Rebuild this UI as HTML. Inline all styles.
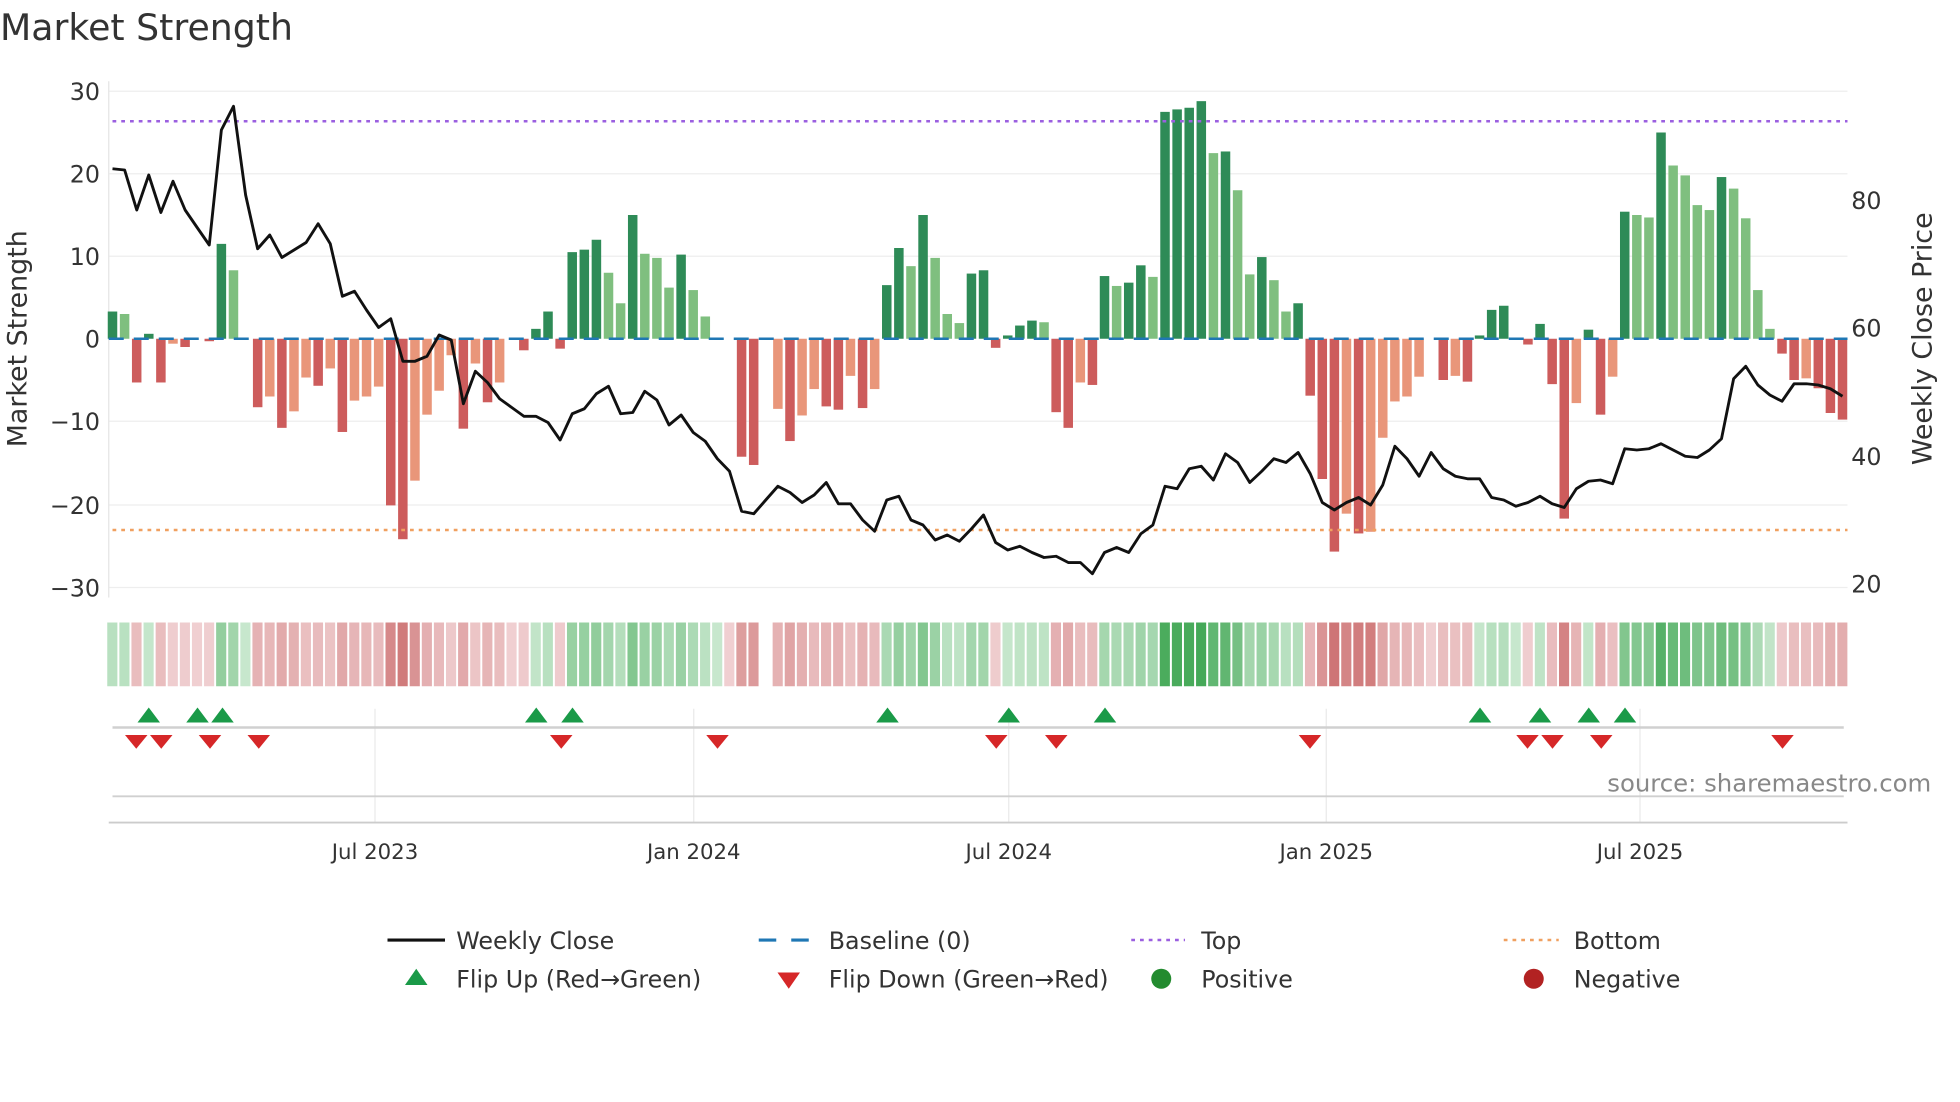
<!DOCTYPE html>
<html><head><meta charset="utf-8"><style>
html,body{margin:0;padding:0;background:#fff;width:1960px;height:1102px;overflow:hidden}
svg{display:block}
text{font-family:"DejaVu Sans","Liberation Sans",sans-serif;fill:#333}
</style></head><body>
<svg id="s" width="1960" height="1102" viewBox="0 0 1568 881.6" xmlns="http://www.w3.org/2000/svg">
<text x="0" y="32" font-size="29">Market Strength</text>
<g stroke="#eeeeee" stroke-width="1">
<line x1="87" x2="1478" y1="73" y2="73"/><line x1="87" x2="1478" y1="139" y2="139"/><line x1="87" x2="1478" y1="205" y2="205"/>
<line x1="87" x2="1478" y1="337" y2="337"/><line x1="87" x2="1478" y1="404" y2="404"/><line x1="87" x2="1478" y1="470" y2="470"/>
</g>
<line x1="87" x2="87" y1="65" y2="478" stroke="#e4e4e4"/>
<g id="bars"></g>
<line x1="87" x2="1478" y1="271" y2="271" stroke="#1f77b4" stroke-width="2" stroke-dasharray="12,8"/>
<line x1="90" x2="1478" y1="97" y2="97" stroke="#9b5fe0" stroke-width="2" stroke-dasharray="3,4"/>
<line x1="90" x2="1478" y1="424" y2="424" stroke="#f0a060" stroke-width="2" stroke-dasharray="3,4"/>
<polyline id="price" fill="none" stroke="#111" stroke-width="2.3" stroke-linejoin="round"/>
<g font-size="19" text-anchor="end">
<text x="80" y="80">30</text><text x="80" y="146">20</text><text x="80" y="212">10</text><text x="80" y="278">0</text>
<text x="80" y="344">−10</text><text x="80" y="411">−20</text><text x="80" y="477">−30</text>
</g>
<g font-size="19">
<text x="1481" y="167">80</text><text x="1481" y="269">60</text><text x="1481" y="372">40</text><text x="1481" y="474">20</text>
</g>
<text transform="translate(21,271) rotate(-90)" font-size="21.5" text-anchor="middle">Market Strength</text>
<text transform="translate(1545,271) rotate(-90)" font-size="21.5" text-anchor="middle">Weekly Close Price</text>
<g id="strip"></g>
<g stroke="#eaeaea"><line x1="300" x2="300" y1="567" y2="658"/><line x1="555" x2="555" y1="567" y2="658"/><line x1="807" x2="807" y1="567" y2="658"/><line x1="1061" x2="1061" y1="567" y2="658"/><line x1="1312" x2="1312" y1="567" y2="658"/></g>
<line x1="90" x2="1475" y1="582" y2="582" stroke="#d0d0d0" stroke-width="2"/>
<line x1="90" x2="1475" y1="637" y2="637" stroke="#d0d0d0" stroke-width="1.5"/>
<line x1="87" x2="1478" y1="658" y2="658" stroke="#cccccc" stroke-width="1.5"/>
<g id="marks"></g>
<text x="1545" y="633" font-size="19.5" text-anchor="end" style="fill:#888">source: sharemaestro.com</text>
<g font-size="17" text-anchor="middle">
<text x="300" y="687">Jul 2023</text><text x="555" y="687">Jan 2024</text><text x="807" y="687">Jul 2024</text><text x="1061" y="687">Jan 2025</text><text x="1312" y="687">Jul 2025</text>
</g>
<g font-size="19">
<line x1="310" x2="356" y1="752" y2="752" stroke="#111" stroke-width="2.5"/><text x="365" y="759">Weekly Close</text>
<line x1="607" x2="650" y1="752" y2="752" stroke="#1f77b4" stroke-width="2.5" stroke-dasharray="14,12"/><text x="663" y="759">Baseline (0)</text>
<line x1="905" x2="948" y1="752" y2="752" stroke="#9b5fe0" stroke-width="2" stroke-dasharray="3,4"/><text x="961" y="759">Top</text>
<line x1="1203" x2="1247" y1="752" y2="752" stroke="#f0a060" stroke-width="2" stroke-dasharray="3,4"/><text x="1259" y="759">Bottom</text>
<polygon points="324,788 342,788 333,775" fill="#1a9a48"/><text x="365" y="790">Flip Up (Red→Green)</text>
<polygon points="622,778 640,778 631,791" fill="#d62728"/><text x="663" y="790">Flip Down (Green→Red)</text>
<circle cx="929" cy="783" r="8" fill="#238b2f"/><text x="961" y="790">Positive</text>
<circle cx="1227" cy="783" r="8" fill="#b22222"/><text x="1259" y="790">Negative</text>
</g>
</svg>
<script>
var NS="http://www.w3.org/2000/svg";
var B="3.3D 3L -5.3R 0.6D -5.3R -0.6S -1R 0R -0.3R 11.5D 8.3L 0D -8.3R -7S -10.8R -8.8S -4.7S -5.7R -3.6S -11.3R -7.5S -7S -5.8S -20.2R -24.3R -17.2S -9.2S -6.3S -2S -10.9R -3S -7.7R -5.3S 0S -1.4R 1.2D 3.3D -1.2R 10.5D 10.8D 12D 8L 4.3L 15D 10.3L 9.8L 6.2L 10.2D 5.9L 2.7L 0S 0S -14.3R -15.3R 0S -8.5S -12.4R -9.3S -6.1S -8.2R -8.6R -4.5S -8.4R -6.1S 6.5D 11D 8.8L 15D 9.8L 3L 1.9L 7.9D 8.3D -1.1R 0.4D 1.6D 2.2D 2L -8.9R -10.8R -5.3S -5.6R 7.6D 6.4L 6.8D 8.9D 7.5L 27.5D 27.8D 28D 28.8D 22.5L 22.7D 18L 7.8L 9.9D 7.1L 3.3L 4.3D -6.9R -17R -25.8R -21.2S -23.6R -23.4S -12S -7.6S -7S -4.6S 0S -5R -4.5S -5.2R 0.4D 3.5D 4D 0S -0.7R 1.8D -5.5R -21.8R -7.8S 1.1D -9.2R -4.6S 15.4D 15L 14.7L 25D 21L 19.8L 16.2L 15.6L 19.6D 18.2L 14.6L 5.9L 1.2L -1.8R -5R -4.8S -6R -9R -9.8R".split(" ");
var col={D:"#2e8b57",L:"#7fbf7f",R:"#cd5c5c",S:"#e9967a"};
var bars=document.getElementById("bars"),strip=document.getElementById("strip");
var step=(1474-90)/143;
function r(g,x,y,w,h,f){var e=document.createElementNS(NS,"rect");e.setAttribute("x",x);e.setAttribute("y",y);e.setAttribute("width",w);e.setAttribute("height",h);e.setAttribute("fill",f);g.appendChild(e);}
B.forEach(function(s,i){var v=parseFloat(s),t=s.slice(-1),cx=90+step*i;
 var h=Math.abs(v)*6.6;if(h>0.3)r(bars,cx-3.8,v>0?271-h:271,7.6,h,col[t]);
 if(i==54)return;
 var a=Math.min(1,0.12+Math.abs(v)/28*0.8),c;
 if(v>0||(v==0&&i>0&&parseFloat(B[i-1])>0)){c="rgb("+Math.round(218-(218-60)*a)+","+Math.round(240-(240-165)*a)+","+Math.round(222-(222-80)*a)+")";}
 else{c="rgb("+Math.round(245-(245-200)*a)+","+Math.round(222-(222-100)*a)+","+Math.round(224-(224-100)*a)+")";}
 r(strip,cx-4.2,498,8.1,51,c);
});
var P=[135,136,168,140,170,145,168,182,196,104,85,156,199,188,206,200,194,179,195,237,233,248,262,255,289,289,285,268,272,323,297,306,319,326,333,333,338,352,331,327,315,309,331,330,313,320,340,332,346,353,367,377,409,411,400,389,394,402,396,386,403,403,416,425,400,397,416,420,432,428,433,423,412,434,440,437,442,446,445,450,450,459,442,438,442,427,420,389,391,375,373,384,363,370,386,377,367,370,362,379,402,408,402,398,404,388,357,367,381,362,375,381,383,383,398,400,405,402,397,403,406,391,385,384,387,359,360,359,355,360,365,366,360,351,303,293,308,316,321,307,307,308,311,317];
document.getElementById("price").setAttribute("points",P.map(function(y,i){return (90+step*i).toFixed(1)+","+y}).join(" "));
var m=document.getElementById("marks");
[119,158,178,429,458,710,807,884,1184,1232,1271,1300].forEach(function(x){var p=document.createElementNS(NS,"polygon");p.setAttribute("points",(x-9)+",578 "+(x+9)+",578 "+x+",566");p.setAttribute("fill","#1a9a48");m.appendChild(p);});
[109,129,168,207,449,574,797,845,1048,1222,1242,1281,1426].forEach(function(x){var p=document.createElementNS(NS,"polygon");p.setAttribute("points",(x-9)+",588 "+(x+9)+",588 "+x+",599");p.setAttribute("fill","#d62728");m.appendChild(p);});
</script>
</body></html>
